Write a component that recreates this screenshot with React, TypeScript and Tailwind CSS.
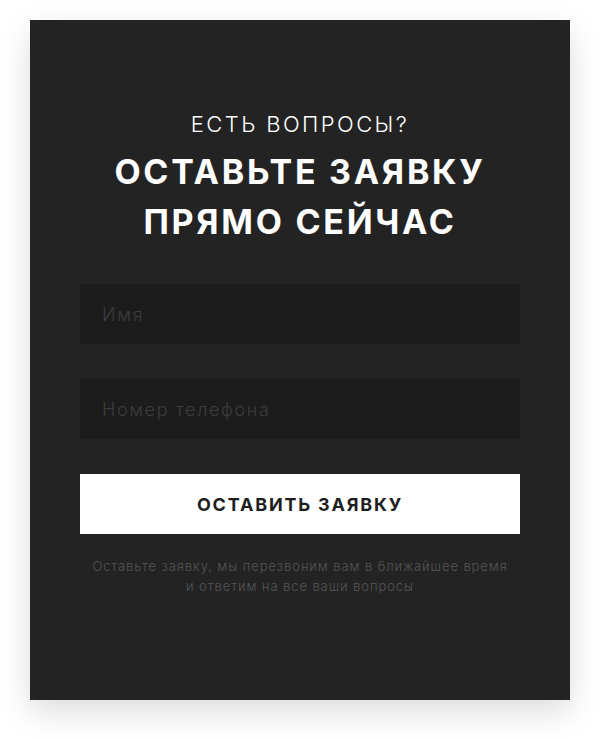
import React from 'react';

const font = { fontFamily: 'Inter, "Noto Sans", sans-serif' };

export default function App() {
  return (
    <div className="min-h-[740px] w-[600px] bg-white pt-5" style={font}>
      <div className="mx-auto flex h-[680px] w-[540px] flex-col items-center bg-[#232323] px-[50px] pt-[89px] shadow-[0_12px_30px_rgba(0,0,0,0.14)]">
        <p className="text-[22px] font-light uppercase leading-[30px] tracking-[0.11em] text-white">Есть вопросы?</p>
        <h1 className="mt-[8px] text-center text-[34px] font-bold uppercase leading-[50px] tracking-[0.08em] text-white">
          Оставьте заявку
          <br />
          прямо сейчас
        </h1>
        <form className="mt-[37px] flex w-full flex-col gap-[35px]">
          <input
            placeholder="Имя"
            className="h-[60px] w-full bg-[#1c1c1c] px-[22px] text-[18px] font-light tracking-[0.09em] text-white outline-none placeholder:text-[#3d3d3d]"
          />
          <input
            placeholder="Номер телефона"
            className="h-[60px] w-full bg-[#1c1c1c] px-[22px] text-[18px] font-light tracking-[0.09em] text-white outline-none placeholder:text-[#3d3d3d]"
          />
          <button
            type="button"
            className="h-[60px] w-full bg-white text-[18px] font-bold uppercase tracking-[0.1em] text-[#1e1e1e]"
          >
            Оставить заявку
          </button>
        </form>
        <p className="mt-[22px] text-center text-[13px] font-light leading-[20px] tracking-[0.07em] text-[#555555]">
          Оставьте заявку, мы перезвоним вам в ближайшее время
          <br />
          и ответим на все ваши вопросы
        </p>
      </div>
    </div>
  );
}
